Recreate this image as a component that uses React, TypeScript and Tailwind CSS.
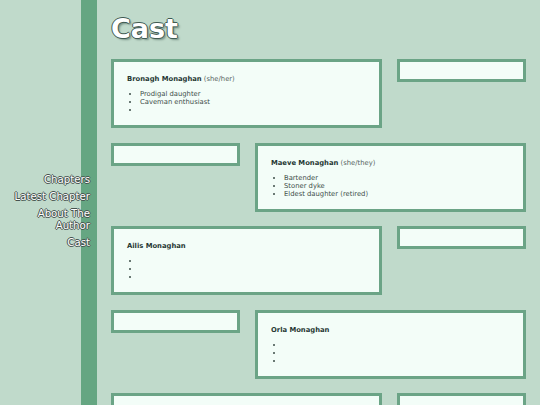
const cast = [
  { name: "Bronagh Monaghan", pronouns: "(she/her)", notes: ["Prodigal daughter", "Caveman enthusiast", ""] },
  { name: "Maeve Monaghan", pronouns: "(she/they)", notes: ["Bartender", "Stoner dyke", "Eldest daughter (retired)"] },
  { name: "Ailis Monaghan", pronouns: "", notes: ["", "", ""] },
  { name: "Orla Monaghan", pronouns: "", notes: ["", "", ""] },
  { name: "", pronouns: "", notes: ["", "", ""] },
];

const links = ["Chapters", "Latest Chapter", "About The Author", "Cast"];

const font = { fontFamily: '"DejaVu Sans", Verdana, sans-serif' };

function Card({ member }: { member: (typeof cast)[number] }) {
  return (
    <div className="h-[69px] border-[3px] border-[#6ba486] bg-[#f3fdf8] px-[13px] pt-[13px] text-[6.8px] leading-[8px]">
      <p>
        <span className="font-bold text-[#263834]">{member.name}</span>
        {member.pronouns && <span className="text-[#55645f]"> {member.pronouns}</span>}
      </p>
      <ul className="mt-[7px] list-disc pl-[13px] text-[#3d4d49]">
        {member.notes.map((n, i) => (
          <li key={i}>{n || "\u00a0"}</li>
        ))}
      </ul>
    </div>
  );
}

function Spacer() {
  return <div className="h-[23px] border-[3px] border-[#6ba486] bg-[#f3fdf8]" />;
}

export default function App() {
  return (
    <div style={font} className="flex h-[405px] overflow-hidden bg-[#c0dacb]">
      {/* SIDEBAR */}
      <aside className="flex w-[97px] shrink-0 flex-col items-end justify-center bg-[linear-gradient(to_right,#c0dacb_81px,#65a682_81px)] pt-[17px] pr-[7px]">
        <nav className="flex w-[78px] flex-col gap-[5px] text-right text-[10.2px] leading-[12px] text-white [text-shadow:1px_0_#46524e,-1px_0_#46524e,0_1px_#46524e,0_-1px_#46524e]">
          {links.map((l) => (
            <a key={l} href="#">{l}</a>
          ))}
        </nav>
      </aside>

      {/* MAIN */}
      <main className="w-[415px] pl-[14px]">
        <h1 className="mt-[11px] mb-[12px] h-[36px] text-[27px] leading-[36px] font-bold text-white [text-shadow:1px_0_#3f5a52,-1px_0_#3f5a52,0_1px_#3f5a52,0_-1px_#3f5a52,2px_2px_2px_#7a9488]">
          Cast
        </h1>

        <div className="flex w-[415px] flex-col gap-[14.5px]">
          {cast.map((m, i) =>
            i % 2 === 0 ? (
              <div key={i} className="grid grid-cols-[271px_129px] gap-x-[15px] items-start">
                <Card member={m} />
                <Spacer />
              </div>
            ) : (
              <div key={i} className="grid grid-cols-[129px_271px] gap-x-[15px] items-start">
                <Spacer />
                <Card member={m} />
              </div>
            )
          )}
        </div>
      </main>
    </div>
  );
}
